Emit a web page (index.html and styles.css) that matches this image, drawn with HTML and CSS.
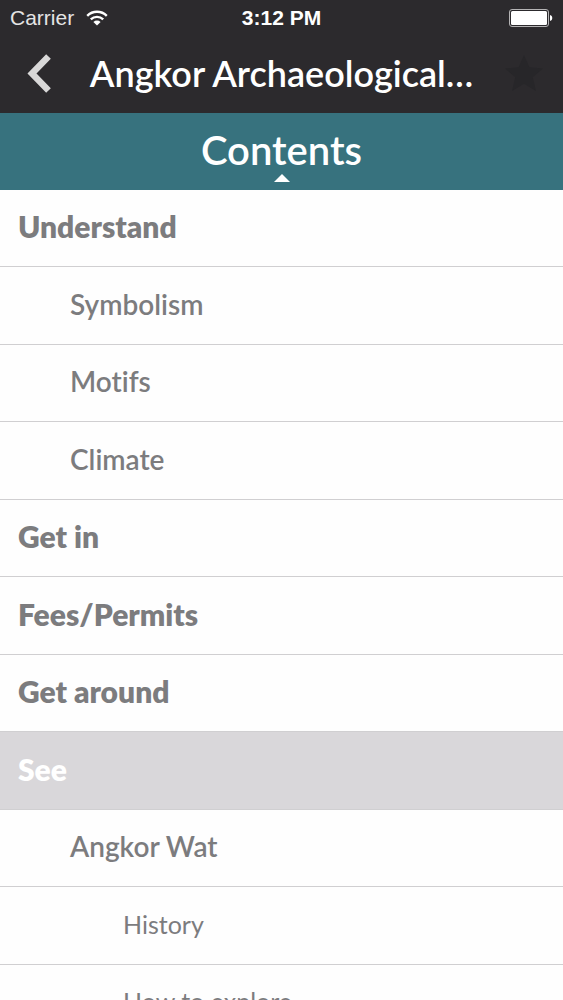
FILE: index.html
```html
<!DOCTYPE html>
<html lang="en">
<head>
    <meta charset="UTF-8">
    <meta name="viewport" content="width=device-width, initial-scale=1.0">
    <title>Angkor Archaeological Park</title>
    <link rel="stylesheet" href="styles.css">
</head>
<body>
    <header class="header">
        <div class="status-bar">
            <div class="carrier">
                <span>Carrier</span>
                <svg class="wifi" viewBox="0 0 22 16" aria-hidden="true">
                    <path d="M1.2 5.8a14 14 0 0 1 19.6 0M4.8 9.4a9 9 0 0 1 12.4 0" fill="none" stroke="currentColor" stroke-width="2.4"/>
                    <path d="M7.4 12a5.2 5.2 0 0 1 7.2 0L11 15.6z" fill="currentColor"/>
                </svg>
            </div>
            <span class="time">3:12 PM</span>
            <svg class="battery" viewBox="0 0 44 18" aria-hidden="true">
                <rect x="0.5" y="0.5" width="39" height="17" rx="2.5" fill="none" stroke="#b5b4b5"/>
                <rect x="2" y="2" width="36" height="14" rx="1.5" fill="#fff"/>
                <path d="M41 6c3 .6 3 5.400 0 6z" fill="#fff"/>
            </svg>
        </div>
        <div class="navbar">
            <button type="button" class="nav-button" aria-label="Back">
                <svg class="back-icon" viewBox="0 0 24 40" aria-hidden="true">
                    <path d="M21.500 3.500L5 20.500l16.500 17" fill="none" stroke="#d9d8d8" stroke-width="6.500"/>
                </svg>
            </button>
            <h1>Angkor Archaeological…</h1>
            <button type="button" class="nav-button" aria-label="Favorite">
                <svg class="star-icon" viewBox="0 0 38 36" aria-hidden="true">
                    <path d="M19 0l5.400 12.200L38 13.500 27.700 22.300 31 36l-12-7.200L7 36l3.300-13.700L0 13.500l13.600-1.300z" fill="#272629"/>
                </svg>
            </button>
        </div>
    </header>

    <button type="button" class="contents">
        <span>Contents</span>
        <svg class="arrow" viewBox="0 0 16 8" aria-hidden="true">
            <path d="M8 0l8 8H0z" fill="#fff"/>
        </svg>
    </button>

    <nav class="toc">
        <a href="#understand">Understand</a>
        <a href="#symbolism" class="sub">Symbolism</a>
        <a href="#motifs" class="sub">Motifs</a>
        <a href="#climate" class="sub">Climate</a>
        <a href="#get-in">Get in</a>
        <a href="#fees">Fees/Permits</a>
        <a href="#get-around">Get around</a>
        <a href="#see" class="active">See</a>
        <a href="#angkor-wat" class="sub">Angkor Wat</a>
        <a href="#history" class="sub-sub">History</a>
        <a href="#explore" class="sub-sub">How to explore</a>
    </nav>
</body>
</html>
```
FILE: styles.css
```css
* {
    box-sizing: border-box;
}
body {
    font-family: Lato, sans-serif;
    font-variant-ligatures: none;
    margin: 0;
    background: #fefefe;
    color: #7c7c7e;
    display: flex;
    flex-direction: column;
    height: 100vh;
    overflow: hidden;
}
button {
    font-family: inherit;
    color: inherit;
    background: none;
    border: none;
    padding: 0;
    cursor: pointer;
}
svg {
    display: block;
}
.header {
    background: #2c2a2d;
    color: white;
}
.status-bar {
    display: grid;
    grid-template-columns: 1fr auto 1fr;
    align-items: center;
    height: 36px;
    padding: 0 10px;
    font-family: "Liberation Sans", Arial, sans-serif;
    font-size: 21px;
}
.carrier {
    display: flex;
    align-items: center;
    gap: 12px;
    color: #e4e4e4;
}
.wifi {
    width: 22px;
    height: 16px;
    color: white;
}
.time {
    font-weight: bold;
}
.battery {
    width: 44px;
    height: 18px;
    justify-self: end;
}
.navbar {
    display: flex;
    align-items: center;
    justify-content: space-between;
    height: 77px;
    padding: 0 20px 4px;
}
.nav-button {
    display: flex;
    align-items: center;
    justify-content: center;
    width: 38px;
    height: 44px;
}
.back-icon {
    width: 24px;
    height: 40px;
}
.star-icon {
    width: 38px;
    height: 36px;
}
h1 {
    margin: 0;
    font-size: 36px;
    font-weight: 600;
    line-height: 44px;
    white-space: nowrap;
}
.contents {
    display: flex;
    flex-direction: column;
    align-items: center;
    flex-shrink: 0;
    height: 77px;
    padding-top: 13px;
    background: #37727e;
    color: white;
    font-size: 40px;
    font-weight: 600;
    line-height: 48px;
}
.arrow {
    width: 16px;
    height: 8px;
}
.toc {
    display: grid;
    grid-auto-rows: 77px 78px;
    flex: 1;
    overflow: hidden;
}
.toc a {
    display: flex;
    align-items: center;
    padding: 0 18px 4px;
    border-bottom: 1px solid #d0cfd1;
    color: inherit;
    font-size: 30px;
    font-weight: 800;
    text-decoration: none;
}
.toc .sub {
    padding-left: 70px;
    font-size: 28px;
    font-weight: 600;
}
.toc .sub-sub {
    padding-left: 123px;
    font-size: 25px;
    font-weight: 400;
}
.toc .active {
    background: #d9d7da;
    color: white;
}
```
